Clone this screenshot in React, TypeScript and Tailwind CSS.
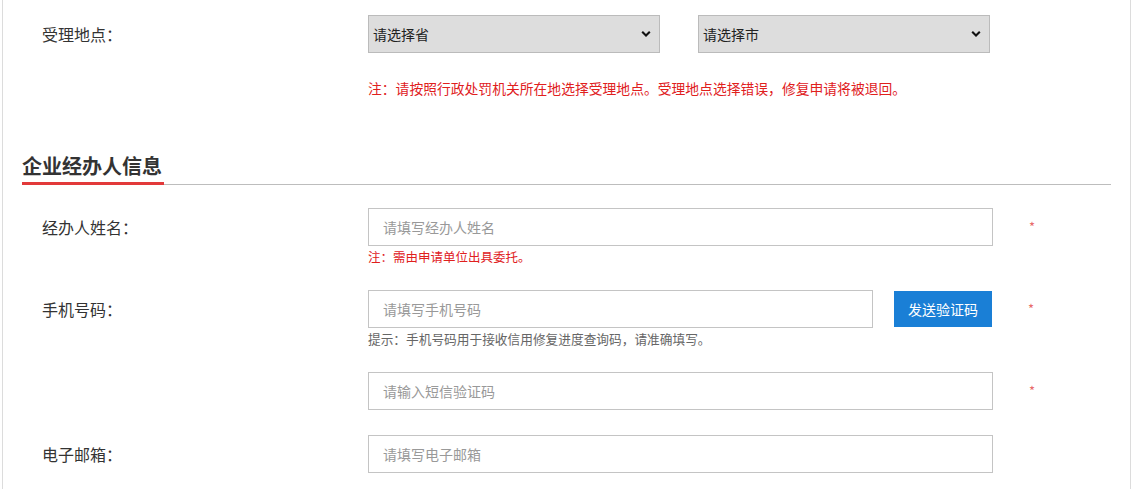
import React from "react";

const font = { fontFamily: '"Noto Sans CJK SC", "Noto Sans", sans-serif' };

function Chevron() {
  return (
    <svg className="pointer-events-none absolute right-[9px] top-1/2 -translate-y-1/2" width="10" height="7" viewBox="0 0 10 7">
      <path d="M1.2 1.3 L5 5 L8.8 1.3" fill="none" stroke="#111" strokeWidth="2.1" />
    </svg>
  );
}

function Select({ label }: { label: string }) {
  return (
    <div className="relative w-[292px] h-[38px]">
      <select
        className="appearance-none w-full h-full bg-[#dddddd] border border-[#bbbbbb] pl-[4px] text-[14px] text-[#222] outline-none"
        style={font}
        defaultValue=""
      >
        <option value="">{label}</option>
      </select>
      <Chevron />
    </div>
  );
}

function Input({ placeholder, w }: { placeholder: string; w: string }) {
  return (
    <input
      placeholder={placeholder}
      className={`${w} h-[38px] border border-[#c4c4c4] bg-white pl-[14px] text-[14px] text-[#333] placeholder:text-[#999] outline-none`}
      style={font}
    />
  );
}

function Star() {
  return <span className="ml-[36px] text-[13px] text-[#e86a6a] leading-none -mt-[2px]">*</span>;
}

export default function App() {
  return (
    <div className="bg-white w-[1134px] h-[489px] overflow-hidden" style={font}>
      <div className="ml-[2px] w-[1129px] h-[489px] border-x border-[#dcdcdc] pt-[15px]">
        {/* 受理地点 */}
        <div className="flex items-center h-[38px]">
          <div className="pl-[39px] w-[365px] text-[16px] text-[#333]">受理地点：</div>
          <div className="flex gap-[38px]">
            <Select label="请选择省" />
            <Select label="请选择市" />
          </div>
        </div>
        <div className="mt-[25px] pl-[365px] text-[13.8px] leading-[20px] text-[#e0201d]">
          注：请按照行政处罚机关所在地选择受理地点。受理地点选择错误，修复申请将被退回。
        </div>

        {/* heading */}
        <div className="mt-[54px] ml-[19px] mr-[19px] border-b border-[#bdbdbd]">
          <div className="inline-block border-b-[3px] border-[#e2393a] text-[20px] font-bold leading-[28px] pb-[2px] text-[#333] -mb-[1px] pr-[2px]">
            企业经办人信息
          </div>
        </div>

        {/* 经办人姓名 */}
        <div className="mt-[23px] flex items-center">
          <div className="pl-[39px] w-[365px] text-[16px] text-[#333]">经办人姓名：</div>
          <Input placeholder="请填写经办人姓名" w="w-[625px]" />
          <Star />
        </div>
        <div className="mt-[2px] pl-[365px] text-[12.5px] leading-[18px] text-[#e0201d]">注：需由申请单位出具委托。</div>

        {/* 手机号码 */}
        <div className="mt-[24px] flex items-center">
          <div className="pl-[39px] w-[365px] text-[16px] text-[#333]">手机号码：</div>
          <Input placeholder="请填写手机号码" w="w-[505px]" />
          <button className="ml-[21px] w-[98px] h-[36px] bg-[#1a7fd6] text-white text-[14px]" style={font}>
            发送验证码
          </button>
          <Star />
        </div>
        <div className="mt-[2px] pl-[365px] text-[12.7px] leading-[18px] text-[#666]">
          提示：手机号码用于接收信用修复进度查询码，请准确填写。
        </div>

        {/* 验证码 */}
        <div className="mt-[24px] flex items-center">
          <div className="w-[365px]" />
          <Input placeholder="请输入短信验证码" w="w-[625px]" />
          <Star />
        </div>

        {/* 电子邮箱 */}
        <div className="mt-[25px] flex items-center">
          <div className="pl-[39px] w-[365px] text-[16px] text-[#333]">电子邮箱：</div>
          <Input placeholder="请填写电子邮箱" w="w-[625px]" />
        </div>
      </div>
    </div>
  );
}
